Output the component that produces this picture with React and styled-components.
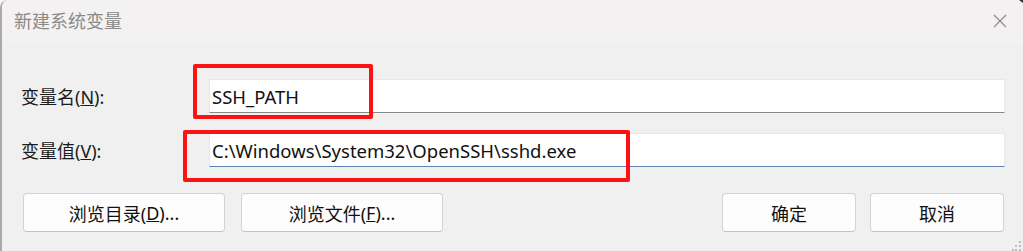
import React from "react";
import styled, { createGlobalStyle } from "styled-components";

const GlobalStyle = createGlobalStyle`
  html, body { margin: 0; padding: 0; background: #f7f7f7; }
  body {
    font-family: "Noto Sans", "Noto Sans CJK SC", sans-serif;
    -webkit-font-smoothing: antialiased;
  }
`;

const FONT = `"Noto Sans", "Noto Sans CJK SC", sans-serif`;

const Page = styled.div`
  position: relative;
  width: 1023px;
  height: 251px;
  overflow: hidden;
`;

const Window = styled.div`
  width: 1023px;
  height: 251px;
  box-sizing: border-box;
  border-left: 2px solid #a9a9a9;
  border-top-left-radius: 8px;
  background: #f0f0f0;
  display: flex;
  flex-direction: column;
  overflow: hidden;
`;

const TitleBar = styled.div`
  flex: none;
  height: 42px;
  box-sizing: border-box;
  background: #f3f1f2;
  display: flex;
  align-items: center;
  justify-content: space-between;
  padding: 0 16px 3px 12px;
`;

const Title = styled.div`
  font-family: ${FONT};
  font-size: 18px;
  color: #8a8a8a;
`;

const CloseButton = styled.button`
  border: none;
  background: transparent;
  padding: 0;
  width: 14px;
  height: 14px;
  display: flex;
  margin-top: 3px;
`;

const Body = styled.div`
  flex: 1;
  padding: 37px 18px 0 19px;
  display: flex;
  flex-direction: column;
`;

const Form = styled.div`
  display: grid;
  grid-template-columns: 188px 1fr;
  grid-auto-rows: 34px;
  row-gap: 20px;
  align-items: center;
`;

const Label = styled.label`
  font-family: ${FONT};
  font-size: 18px;
  color: #1b1b1b;
  white-space: nowrap;
`;

const Field = styled.div`
  height: 34px;
  box-sizing: border-box;
  background: #ffffff;
  border: 1px solid #e8e8e8;
  border-bottom: 1px solid ${(p) => (p.$focused ? "#5b84b4" : "#878787")};
  display: flex;
  align-items: center;
  padding-left: 2px;
  font-family: ${FONT};
  font-size: 18.5px;
  color: #111;
  white-space: nowrap;
`;

const ButtonRow = styled.div`
  display: flex;
  margin-top: 26px;
  padding: 0 1px 0 2px;
`;

const Group = styled.div`
  display: flex;
  gap: ${(p) => p.$gap}px;
`;

const Spacer = styled.div`
  flex: 1;
`;

const Button = styled.button`
  width: ${(p) => p.$w}px;
  height: 39px;
  box-sizing: border-box;
  background: #fdfdfd;
  border: 1px solid #d3d3d3;
  border-bottom-color: #c2c2c2;
  border-radius: 4px;
  font-family: ${FONT};
  font-size: 18px;
  color: #111;
  padding: 0;
  display: flex;
  align-items: center;
  justify-content: center;
  padding-top: 1px;
`;

const Highlight = styled.div`
  position: absolute;
  box-sizing: border-box;
  border: 4px solid #fc1212;
  border-radius: 2px;
  left: ${(p) => p.$x}px;
  top: ${(p) => p.$y}px;
  width: ${(p) => p.$w}px;
  height: ${(p) => p.$h}px;
  pointer-events: none;
`;

const Grip = styled.svg`
  position: absolute;
  right: 1px;
  bottom: 0;
`;

const CornerMark = styled.svg`
  position: absolute;
  right: 0;
  top: 0;
`;

export default function App() {
  return (
    <>
      <GlobalStyle />
      <Page>
        <Window>
          <TitleBar>
            <Title>新建系统变量</Title>
            <CloseButton aria-label="关闭">
              <svg width="14" height="14" viewBox="0 0 14 14">
                <path d="M1 1 L13 13 M13 1 L1 13" stroke="#8c8c8c" strokeWidth="1.2" fill="none" />
              </svg>
            </CloseButton>
          </TitleBar>
          <Body>
            <Form>
              <Label>
                变量名(<u>N</u>):
              </Label>
              <Field>SSH_PATH</Field>
              <Label>
                变量值(<u>V</u>):
              </Label>
              <Field $focused>C:\Windows\System32\OpenSSH\sshd.exe</Field>
            </Form>
            <ButtonRow>
              <Group $gap={16}>
                <Button $w={202}>
                  浏览目录(<u>D</u>)...
                </Button>
                <Button $w={202}>
                  浏览文件(<u>F</u>)...
                </Button>
              </Group>
              <Spacer />
              <Group $gap={14}>
                <Button $w={134}>确定</Button>
                <Button $w={134}>取消</Button>
              </Group>
            </ButtonRow>
          </Body>
        </Window>
        <Highlight $x={193} $y={64} $w={180} $h={55} />
        <Highlight $x={183} $y={130} $w={447} $h={52} />
        <Grip width="10" height="10" viewBox="0 0 10 10">
          <rect x="7" y="0" width="2" height="2" fill="#bdbdbd" />
          <rect x="3" y="4" width="2" height="2" fill="#bdbdbd" />
          <rect x="7" y="4" width="2" height="2" fill="#bdbdbd" />
          <rect x="0" y="8" width="2" height="2" fill="#bdbdbd" />
          <rect x="3" y="8" width="2" height="2" fill="#bdbdbd" />
          <rect x="7" y="8" width="2" height="2" fill="#bdbdbd" />
        </Grip>
        <CornerMark width="4" height="4" viewBox="0 0 4 4">
          <path d="M0 0 L4 0 L4 3 Z" fill="#333" />
        </CornerMark>
      </Page>
    </>
  );
}
